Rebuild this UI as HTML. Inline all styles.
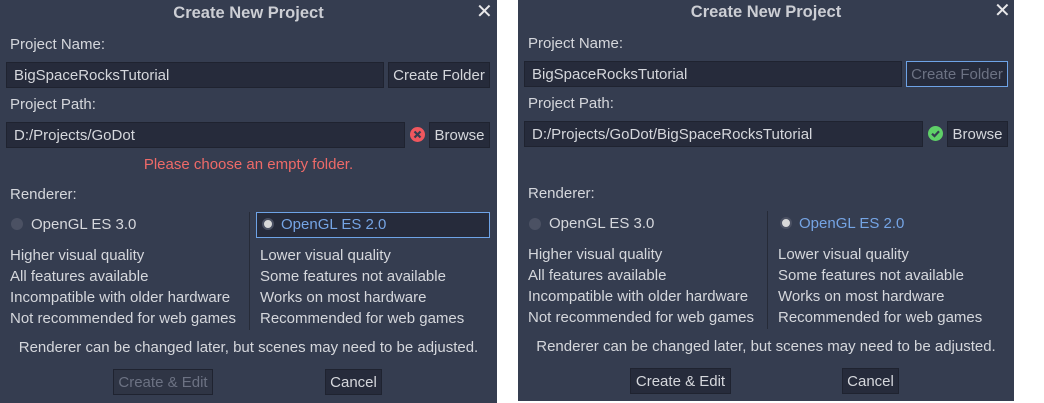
<!DOCTYPE html>
<html><head><style>
body{margin:0;width:1044px;height:403px;background:#fff;position:relative;overflow:hidden;font-family:"Liberation Sans","DejaVu Sans",sans-serif;font-size:15px;color:#d5d7dc}
.p{position:absolute;background:#353d50;top:0}
.a{position:absolute;white-space:nowrap;line-height:20px}
.f{position:absolute;background:#262b3b;border:1px solid #1f2330;box-sizing:border-box;padding-left:7px;line-height:25px}
.b{position:absolute;background:#262b3b;border:1px solid #1f2330;box-sizing:border-box;text-align:center;line-height:25px}
.t{font-weight:bold;font-size:16.5px;color:#ccced4}
.x{position:absolute;font-size:20px;font-weight:bold;color:#e8e8ea;line-height:20px}
.sep{position:absolute;width:1px;background:#262b38}
.r{position:absolute;width:12px;height:12px;border-radius:50%;background:#4b5163}
.rs{background:#d8d8d8;border:2px solid #4b5163;width:8px;height:8px}
</style></head><body>
<div class="p" style="left:0;width:497px;height:403px">
 <div class="a t" style="left:0;width:497px;text-align:center;top:3px">Create New Project</div>
 <div class="x" style="left:476px;top:2px">✕</div>
 <div class="a" style="left:10px;top:35px">Project Name:</div>
 <div class="f" style="left:6px;top:62px;width:378px;height:26px">BigSpaceRocksTutorial</div>
 <div class="b" style="left:388px;top:62px;width:102px;height:26px">Create Folder</div>
 <div class="a" style="left:10px;top:95px">Project Path:</div>
 <div class="f" style="left:6px;top:122px;width:399px;height:26px">D:/Projects/GoDot</div>
 <svg style="position:absolute;left:409px;top:126px" width="17" height="17"><circle cx="8.5" cy="8.5" r="7.5" fill="#f0575e"/><path d="M5.5 5.5L11.5 11.5M11.5 5.5L5.5 11.5" stroke="#353d50" stroke-width="2.2"/></svg>
 <div class="b" style="left:429px;top:122px;width:61px;height:26px">Browse</div>
 <div class="a" style="left:0;width:497px;text-align:center;top:155px;color:#ee6a68">Please choose an empty folder.</div>
 <div class="a" style="left:10px;top:185px">Renderer:</div>
 <div class="r" style="left:11px;top:218px"></div>
 <div class="a" style="left:31px;top:215px">OpenGL ES 3.0</div>
 <div class="sep" style="left:249px;top:212px;height:118px"></div>
 <div style="position:absolute;left:256px;top:212px;width:234px;height:26px;box-sizing:border-box;border:1px solid #6ea3e6;background:#262b3b"></div>
 <div class="r rs" style="left:262px;top:218px"></div>
 <div class="a" style="left:281px;top:215px;color:#75a4e4">OpenGL ES 2.0</div>
 <div class="a" style="left:10px;top:245px;line-height:21px">Higher visual quality<br>All features available<br>Incompatible with older hardware<br>Not recommended for web games</div>
 <div class="a" style="left:260px;top:245px;line-height:21px">Lower visual quality<br>Some features not available<br>Works on most hardware<br>Recommended for web games</div>
 <div class="a" style="left:0;width:497px;text-align:center;top:338px">Renderer can be changed later, but scenes may need to be adjusted.</div>
 <div class="b" style="left:113px;top:369px;width:100px;height:26px;color:#6c7283;background:#2f3545">Create &amp; Edit</div>
 <div class="b" style="left:325px;top:369px;width:57px;height:26px">Cancel</div>
</div>
<div class="p" style="left:518px;width:496px;height:401px">
 <div class="a t" style="left:0;width:496px;text-align:center;top:2px">Create New Project</div>
 <div class="x" style="left:476px;top:1px">✕</div>
 <div class="a" style="left:10px;top:34px">Project Name:</div>
 <div class="f" style="left:6px;top:61px;width:378px;height:26px">BigSpaceRocksTutorial</div>
 <div class="b" style="left:388px;top:61px;width:102px;height:26px;border-color:#6ea3e6;color:#6c7283">Create Folder</div>
 <div class="a" style="left:10px;top:94px">Project Path:</div>
 <div class="f" style="left:6px;top:121px;width:399px;height:26px">D:/Projects/GoDot/BigSpaceRocksTutorial</div>
 <svg style="position:absolute;left:409px;top:125px" width="17" height="17"><circle cx="8.5" cy="8.5" r="7.5" fill="#5fd068"/><path d="M5 8.7L7.5 11.1L12 6.3" stroke="#353d50" stroke-width="2.2" fill="none"/></svg>
 <div class="b" style="left:429px;top:121px;width:61px;height:26px">Browse</div>
 <div class="a" style="left:10px;top:184px">Renderer:</div>
 <div class="r" style="left:11px;top:218px"></div>
 <div class="a" style="left:31px;top:214px">OpenGL ES 3.0</div>
 <div class="sep" style="left:249px;top:211px;height:118px"></div>
 <div class="r rs" style="left:262px;top:217px"></div>
 <div class="a" style="left:281px;top:214px;color:#75a4e4">OpenGL ES 2.0</div>
 <div class="a" style="left:10px;top:244px;line-height:21px">Higher visual quality<br>All features available<br>Incompatible with older hardware<br>Not recommended for web games</div>
 <div class="a" style="left:260px;top:244px;line-height:21px">Lower visual quality<br>Some features not available<br>Works on most hardware<br>Recommended for web games</div>
 <div class="a" style="left:0;width:496px;text-align:center;top:337px">Renderer can be changed later, but scenes may need to be adjusted.</div>
 <div class="b" style="left:112px;top:368px;width:101px;height:26px">Create &amp; Edit</div>
 <div class="b" style="left:324px;top:368px;width:57px;height:26px">Cancel</div>
</div>
</body></html>
